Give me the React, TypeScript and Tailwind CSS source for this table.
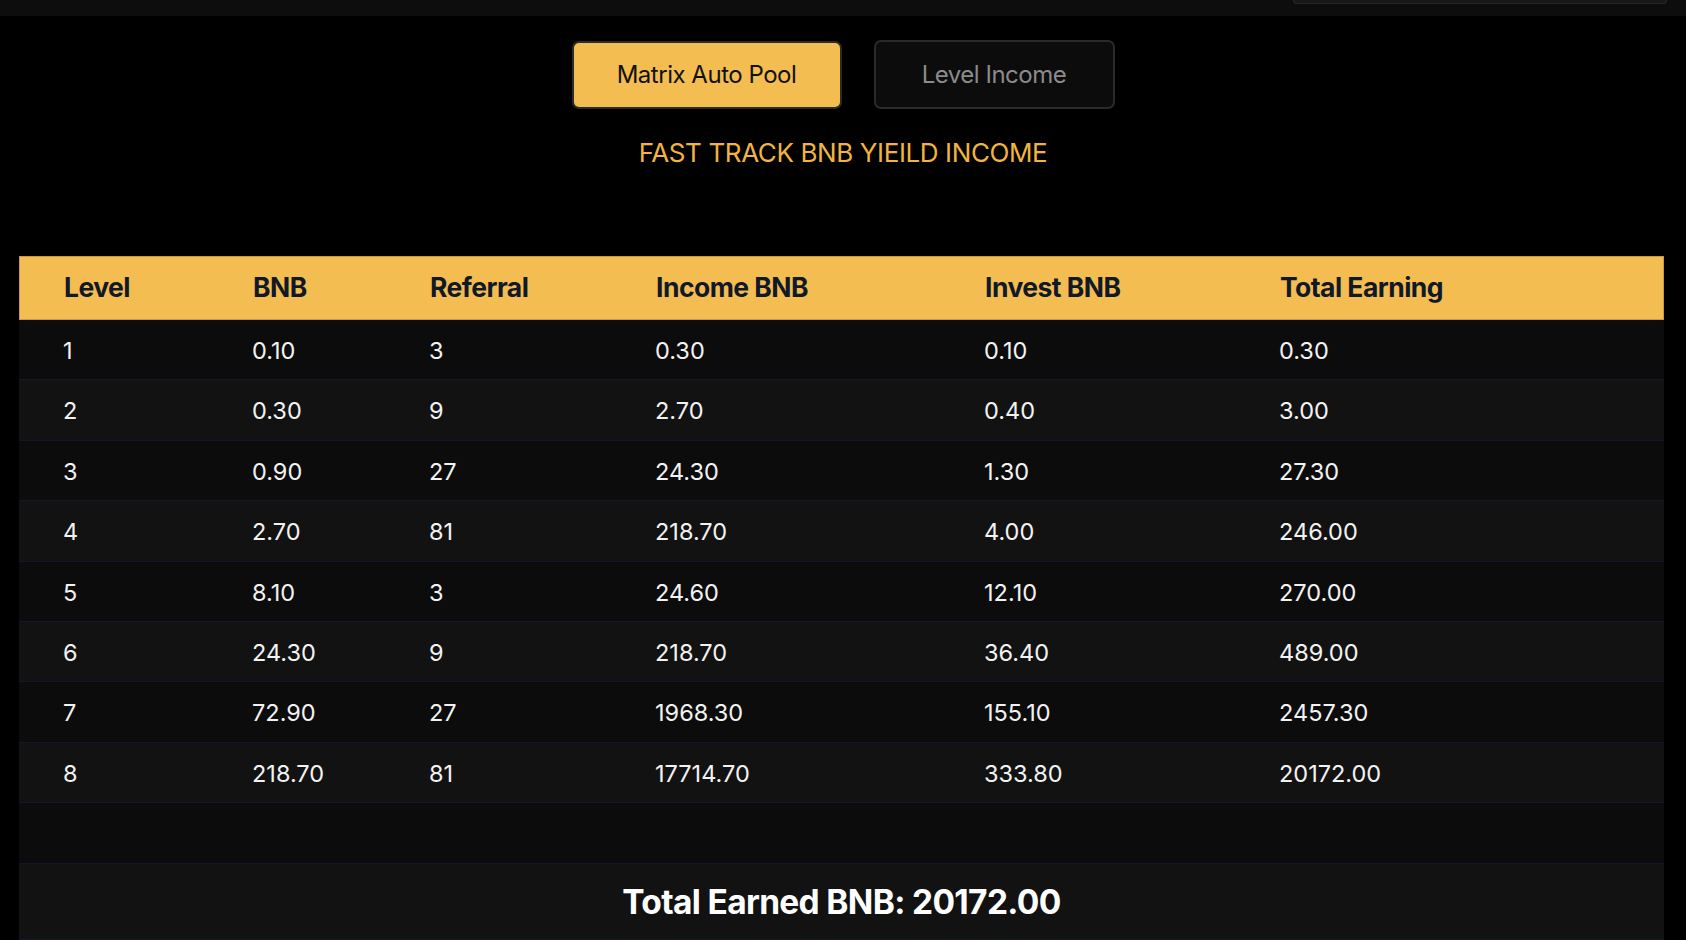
import React from "react";

const rows = [
  ["1", "0.10", "3", "0.30", "0.10", "0.30"],
  ["2", "0.30", "9", "2.70", "0.40", "3.00"],
  ["3", "0.90", "27", "24.30", "1.30", "27.30"],
  ["4", "2.70", "81", "218.70", "4.00", "246.00"],
  ["5", "8.10", "3", "24.60", "12.10", "270.00"],
  ["6", "24.30", "9", "218.70", "36.40", "489.00"],
  ["7", "72.90", "27", "1968.30", "155.10", "2457.30"],
  ["8", "218.70", "81", "17714.70", "333.80", "20172.00"],
];

const headers = ["Level", "BNB", "Referral", "Income BNB", "Invest BNB", "Total Earning"];

const grid = "grid grid-cols-[189px_177px_226px_329px_295px_1fr] pl-[44px] items-center";

export default function App() {
  return (
    <div
      className="min-h-[940px] w-full bg-black overflow-hidden"
      style={{ fontFamily: "Inter, 'Noto Sans', sans-serif" }}
    >
      <div className="h-[16px] bg-[#0d0d0d] flex justify-end pr-[19px]">
        <div className="w-[374px] h-[4px] rounded-b-lg bg-[#1b1917] border-b border-x border-[#2a2622]" />
      </div>

      <div className="flex justify-center items-center gap-[32px] mt-[24px]">
        <button className="w-[270px] h-[68px] rounded-[7px] bg-[#f3bd52] border-2 border-[#2b2b2b] text-[24px] tracking-[-0.02em] text-[#111111]">
          Matrix Auto Pool
        </button>
        <button className="w-[241px] h-[69px] rounded-[7px] bg-[#0c0c0c] border-2 border-[#2a2a2a] text-[24px] tracking-[-0.02em] text-[#8b8b8b]">
          Level Income
        </button>
      </div>

      <div className="mt-[28px] text-center text-[26px] leading-[32px] tracking-[-0.015em] text-[#f1b440]">
        FAST TRACK BNB YIEILD INCOME
      </div>

      <div className="ml-[19px] w-[1645px] mt-[87px]">
        <div className={`${grid} h-[64px] bg-[#f3bd52] border border-[#c99a45] text-[26.5px] font-bold tracking-[-0.02em] text-[#111827]`}>
          {headers.map((h) => (
            <div key={h}>{h}</div>
          ))}
        </div>
        {rows.map((r, i) => (
          <div
            key={i}
            className={`${grid} h-[60.4px] border-b border-[#111827] text-[23.5px] pt-[2px] text-[#f2f2f2] ${
              i % 2 === 0 ? "bg-[#0c0c0c]" : "bg-[#121212]"
            }`}
          >
            {r.map((c, j) => (
              <div key={j}>{c}</div>
            ))}
          </div>
        ))}
        <div className="h-[61px] bg-[#0c0c0c] border-b border-[#111827]" />
        <div className="h-[76px] bg-[#121212] border-b border-[#111827] flex items-center justify-center text-[33.5px] font-bold tracking-[-0.02em] text-white">
          Total Earned BNB: 20172.00
        </div>
      </div>
    </div>
  );
}
